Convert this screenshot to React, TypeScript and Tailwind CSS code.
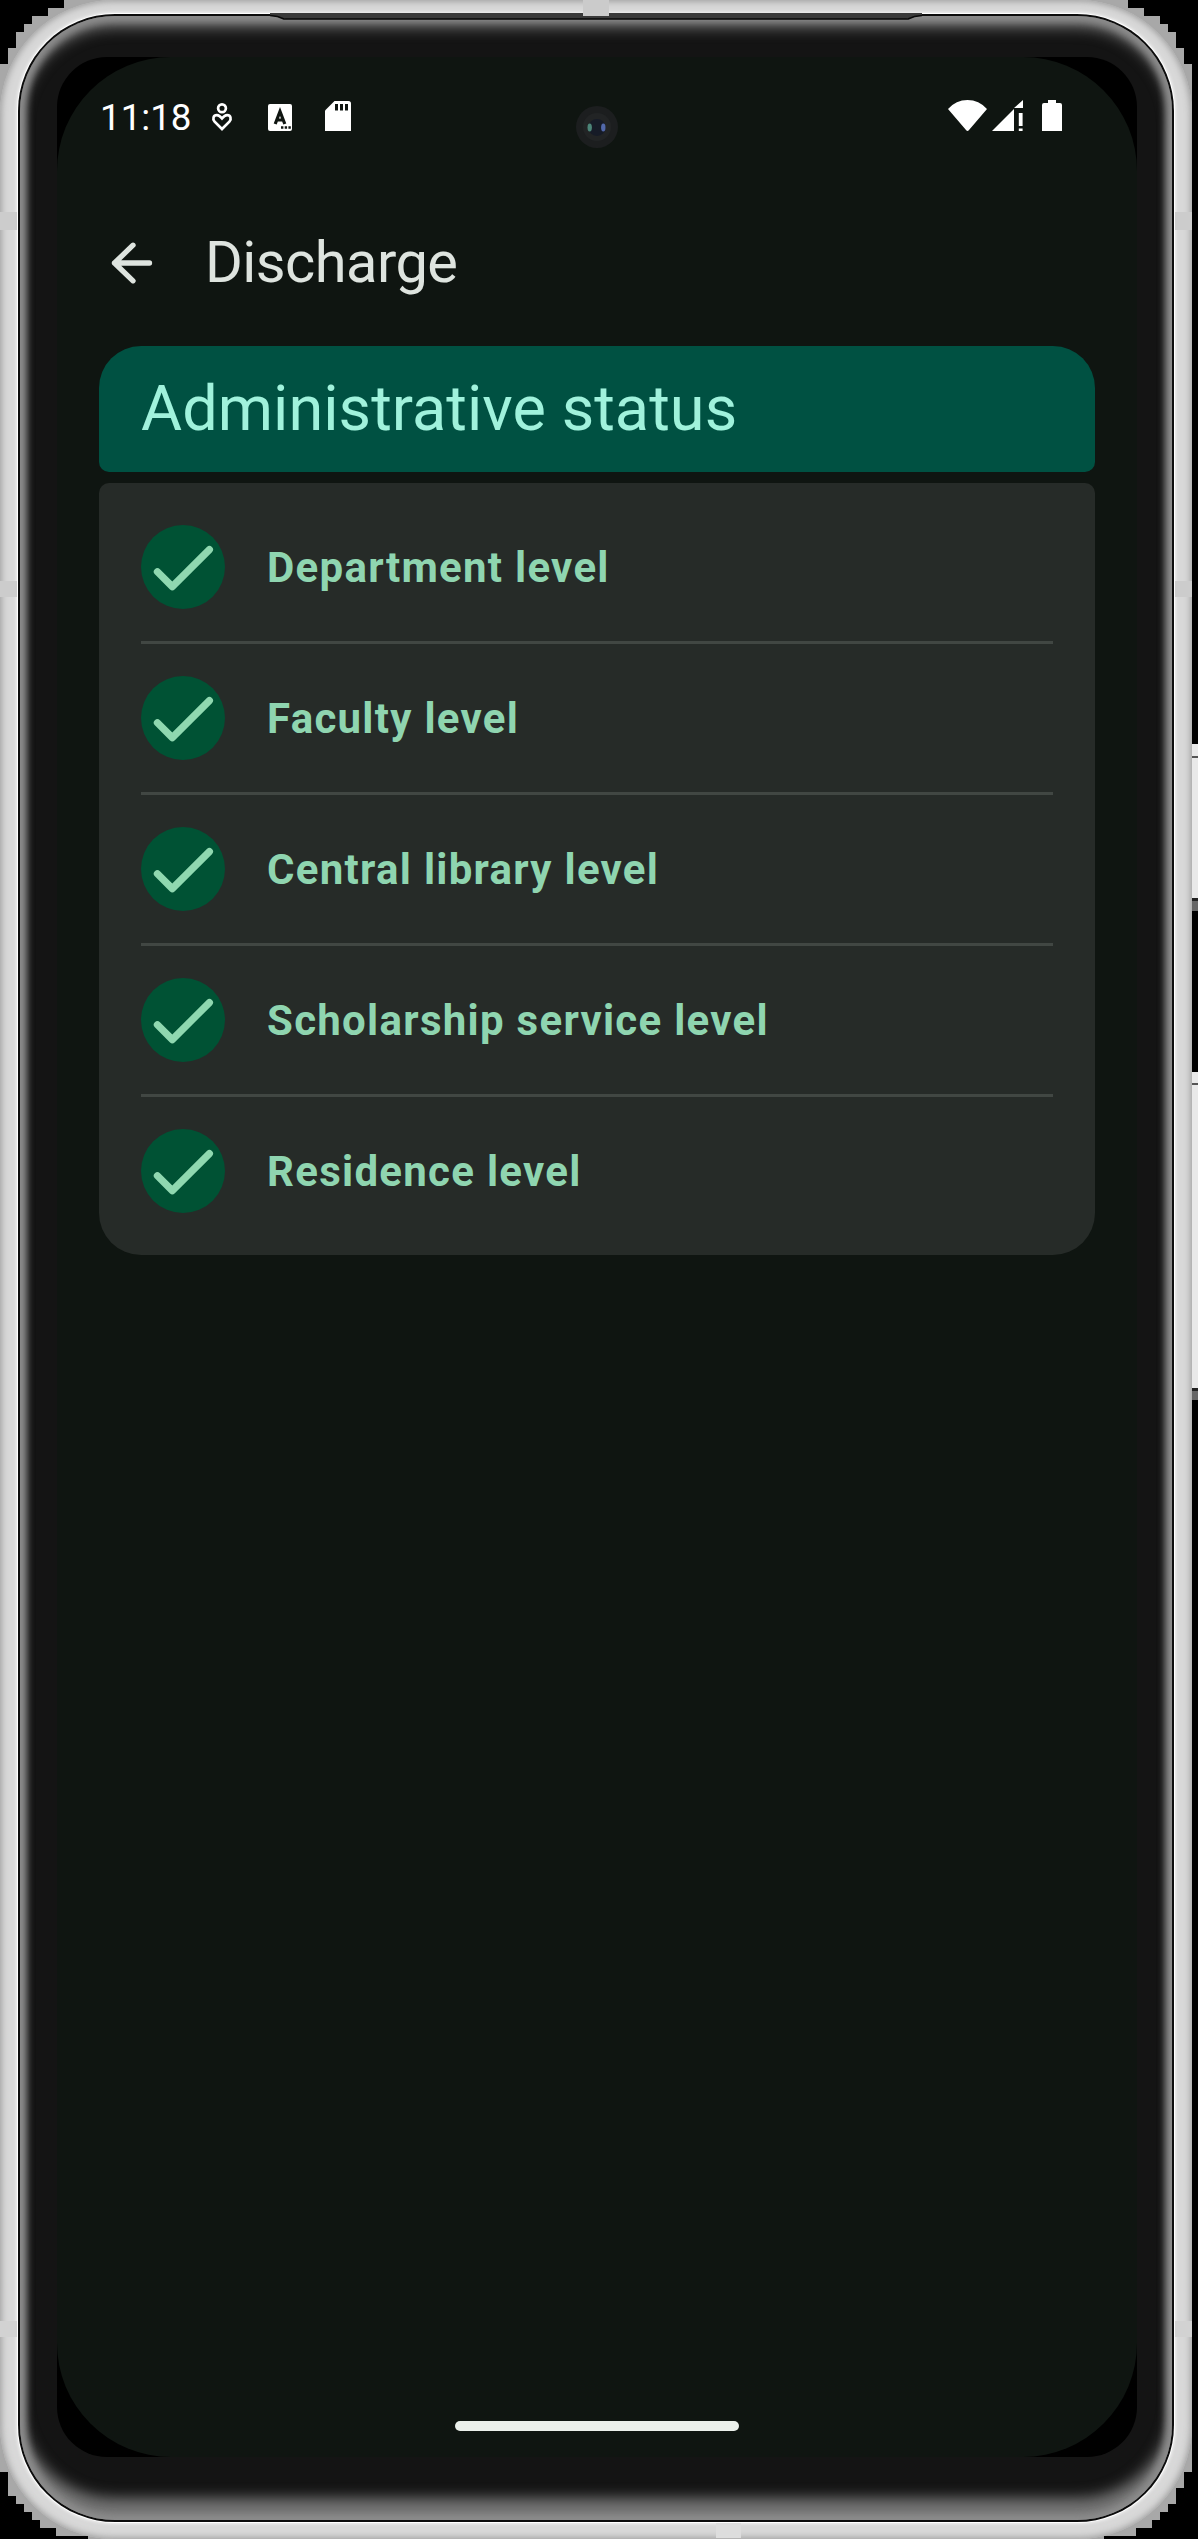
import React from "react";

const levels = [
  "Department level",
  "Faculty level",
  "Central library level",
  "Scholarship service level",
  "Residence level",
];

function StatusBar() {
  return (
    <div className="flex h-[131px] items-start pl-[43px] pr-[75px] pt-[43px] text-white">
      <span className="mt-[-4px] w-[93px] text-[36.75px] leading-[43px] whitespace-nowrap">11:18</span>
      <svg className="ml-[18px] mt-[2px] h-[29px] w-[22px]" viewBox="0 0 22 29" fill="none" stroke="currentColor" strokeWidth="2.7">
        <circle cx="11" cy="6.2" r="3.9" />
        <path d="M11 27 L3.6 19.6 C1.2 17 2.4 13.2 5.8 13.1 C8 13 9.2 14.2 11 16.4 C12.8 14.2 14 13 16.2 13.1 C19.6 13.2 20.8 17 18.4 19.6 Z" />
      </svg>
      <svg className="ml-[35px] mt-[4px] h-[27px] w-[24px]" viewBox="0 0 24 27">
        <rect width="24" height="27" rx="2" fill="currentColor" />
        <path d="M7.2 20 L12 7.5 L16.8 20 M9 16 H15" fill="none" stroke="#0f1511" strokeWidth="3.2" />
        <path d="M13 22.3h2.4v2.4h-2.4z M16.7 22.3h2.4v2.4h-2.4z M20.4 22.3h2.4v2.4h-2.4z" fill="#0f1511" />
      </svg>
      <svg className="ml-[33px] mt-[1px] h-[30px] w-[26px]" viewBox="0 0 26 30">
        <path d="M9.5 0H23.5Q26 0 26 2.5V30H0V9.5Z" fill="currentColor" />
        <path d="M10 3h3v6.5h-3z M15 3h3v6.5h-3z M20 3h3v6.5h-3z" fill="#0f1511" />
      </svg>
      <div className="ml-auto flex">
        <svg className="h-[31px] w-[39px]" viewBox="0 0 39 31" fill="currentColor">
          <path d="M0 9Q8 0 19.5 0T39 9L21 30Q19.5 32 18 30Z" />
        </svg>
        <svg className="ml-[5px] h-[31px] w-[31px]" viewBox="0 0 31 31" fill="currentColor">
          <path d="M0 31L22 9V31Z M22 8L31 0V8Z M26.8 13H30.6V26H26.8Z M26.8 28.5H30.6V31H26.8Z" />
        </svg>
        <svg className="ml-[19px] h-[31px] w-[20px]" viewBox="0 0 20 31" fill="currentColor">
          <path d="M6 0H14V3H18Q20 3 20 5V31H0V5Q0 3 2 3H6Z" />
        </svg>
      </div>
    </div>
  );
}

function CheckBadge() {
  return (
    <span className="flex size-[84px] shrink-0 items-center justify-center rounded-full bg-[#005234]">
      <svg className="size-[84px]" viewBox="0 0 84 84" fill="none" stroke="#8fd8b0" strokeWidth="7.2" strokeLinecap="round" strokeLinejoin="round">
        <path d="M16.4 46.8L31.3 61.6L68.4 24.6" />
      </svg>
    </span>
  );
}

function Camera() {
  return (
    <svg className="absolute left-[519px] top-[49px] size-[42px]" viewBox="0 0 42 42">
      <circle cx="21" cy="21" r="21" fill="#1c1e1f" />
      <circle cx="21" cy="21" r="14" fill="#222425" />
      <circle cx="21" cy="21.5" r="8.5" fill="#161b27" />
      <ellipse cx="13.7" cy="21.5" rx="2.2" ry="4" fill="#4c8578" />
      <ellipse cx="27.3" cy="21.5" rx="2.2" ry="4" fill="#5268aa" />
    </svg>
  );
}

function Screen() {
  return (
    <div className="relative flex h-[2400px] w-[1080px] flex-col rounded-[114px] bg-[#0f1511]">
      <Camera />
      <StatusBar />
      <header className="flex h-[149px] items-center gap-[52px] pl-[54px]">
        <svg className="size-[42px]" viewBox="0 0 42 42" fill="none" stroke="#dee4df" strokeWidth="5.3" strokeLinecap="round" strokeLinejoin="round">
          <path d="M22 3.2L3.5 21L22 38.8M3.5 21H38.5" />
        </svg>
        <h1 className="text-[57.75px] leading-[73px] tracking-[-0.55px] text-[#dee4df]">Discharge</h1>
      </header>
      <section className="mt-[9px] flex flex-col gap-[11px] px-[42px]">
        <div className="h-[126px] rounded-t-[42px] rounded-b-[10px] bg-[#005142] pl-[42px] pt-[21px]">
          <h2 className="text-[63px] leading-[84px] tracking-[0.05px] text-[#a0f2dc]">Administrative status</h2>
        </div>
        <ul className="flex flex-col gap-[32px] rounded-t-[10px] rounded-b-[42px] bg-[#262b28] p-[42px]">
          {levels.map((level, i) => (
            <li
              key={level}
              className={
                i < levels.length - 1
                  ? "flex items-center gap-[42px] border-b-[3px] border-[#414743] pb-[32px]"
                  : "flex items-center gap-[42px]"
              }
            >
              <CheckBadge />
              <span className="text-[42px] leading-[63px] font-bold tracking-[1.28px] text-[#8fd5b0]">{level}</span>
            </li>
          ))}
        </ul>
      </section>
      <div className="mx-auto mt-auto mb-[26px] h-[10px] w-[284px] rounded-full bg-[#ebf0eb]" />
    </div>
  );
}

function SideBands() {
  return (
    <div className="flex w-[17px] flex-col">
      <div className="mt-[212px] h-[18px] bg-[#cccccc]" />
      <div className="mt-[351px] h-[16px] bg-[#cccccc]" />
      <div className="mt-[1724px] h-[16px] bg-[#d2d2d2]" />
    </div>
  );
}

function SideButtons() {
  return (
    <div className="flex w-[6px] flex-col gap-[161px] pt-[744px]">
      <div className="flex h-[167px] flex-col justify-between border-b-[10px] border-[#666] bg-[#e9e9e9] pt-[12px]">
        <div className="h-[2px] bg-[#555]" />
        <div className="h-[3px] bg-[#222]" />
      </div>
      <div className="flex h-[328px] flex-col justify-between border-b-[9px] border-[#666] bg-[#e9e9e9] pt-[11px]">
        <div className="h-[2px] bg-[#555]" />
        <div className="h-[3px] bg-[#222]" />
      </div>
    </div>
  );
}

export default function App() {
  return (
    <main className="flex h-[2539px] w-[1198px] overflow-hidden bg-black font-['Roboto',sans-serif]">
      <div className="relative h-[2539px] w-[1192px] bg-[#a8a8a8] [clip-path:polygon(64px_0,1128px_0,1128px_8px,1144px_8px,1144px_16px,1160px_16px,1160px_24px,1168px_24px,1168px_32px,1176px_32px,1176px_48px,1184px_48px,1184px_64px,1192px_64px,1192px_2472px,1184px_2472px,1184px_2488px,1176px_2488px,1176px_2504px,1168px_2504px,1168px_2512px,1160px_2512px,1160px_2520px,1152px_2520px,1152px_2528px,1136px_2528px,1136px_2536px,1104px_2536px,1104px_2539px,88px_2539px,88px_2536px,56px_2536px,56px_2528px,40px_2528px,40px_2520px,32px_2520px,32px_2512px,24px_2512px,24px_2504px,16px_2504px,16px_2496px,8px_2496px,8px_2472px,0_2472px,0_64px,8px_64px,8px_48px,16px_48px,16px_32px,24px_32px,24px_24px,32px_24px,32px_16px,48px_16px,48px_8px,64px_8px)]">
        <div className="h-[2539px] w-[1192px] rounded-[114px] bg-[#d8d8d8] pl-[17px] pt-[13px] shadow-[inset_0_0_7px_1px_#979797]">
          <div className="h-[2510px] w-[1158px] rounded-[98px] bg-white p-[1px] shadow-[0_0_3px_1px_#f0f0f0]">
            <div className="h-[2508px] w-[1156px] rounded-[97px] bg-[#0c0c0c] p-[2px]">
              <div className="h-[2504px] w-[1152px] rounded-[95px] bg-[#141414] pl-[37px] pt-[41px] shadow-[inset_0_0_7px_6px_#8c8c8c,inset_0_12px_14px_0px_#6a6a6a,inset_0_-22px_14px_0px_#747474]">
                <div className="h-[2400px] w-[1080px] rounded-[50px] bg-black">
                  <Screen />
                </div>
              </div>
            </div>
          </div>
        </div>
        <svg className="absolute left-[270px] top-[13px] h-[8px] w-[652px]" viewBox="0 0 652 8">
          <path d="M0 0H652V2L636 6H16L0 2Z" fill="#3a3a3a" />
          <path d="M0 2.6Q8 3 14 6H638Q644 3 652 2.6" fill="none" stroke="#080808" strokeWidth="1.5" />
        </svg>
        <div className="absolute inset-0 flex justify-between">
          <SideBands />
          <SideBands />
        </div>
        <div className="absolute inset-0 flex flex-col justify-between pb-[1px]">
          <div className="ml-[583px] h-[16px] w-[26px] bg-[#cbcbcb]" />
          <div className="ml-[716px] h-[15px] w-[25px] bg-[#dddddd]" />
        </div>
      </div>
      <SideButtons />
    </main>
  );
}
